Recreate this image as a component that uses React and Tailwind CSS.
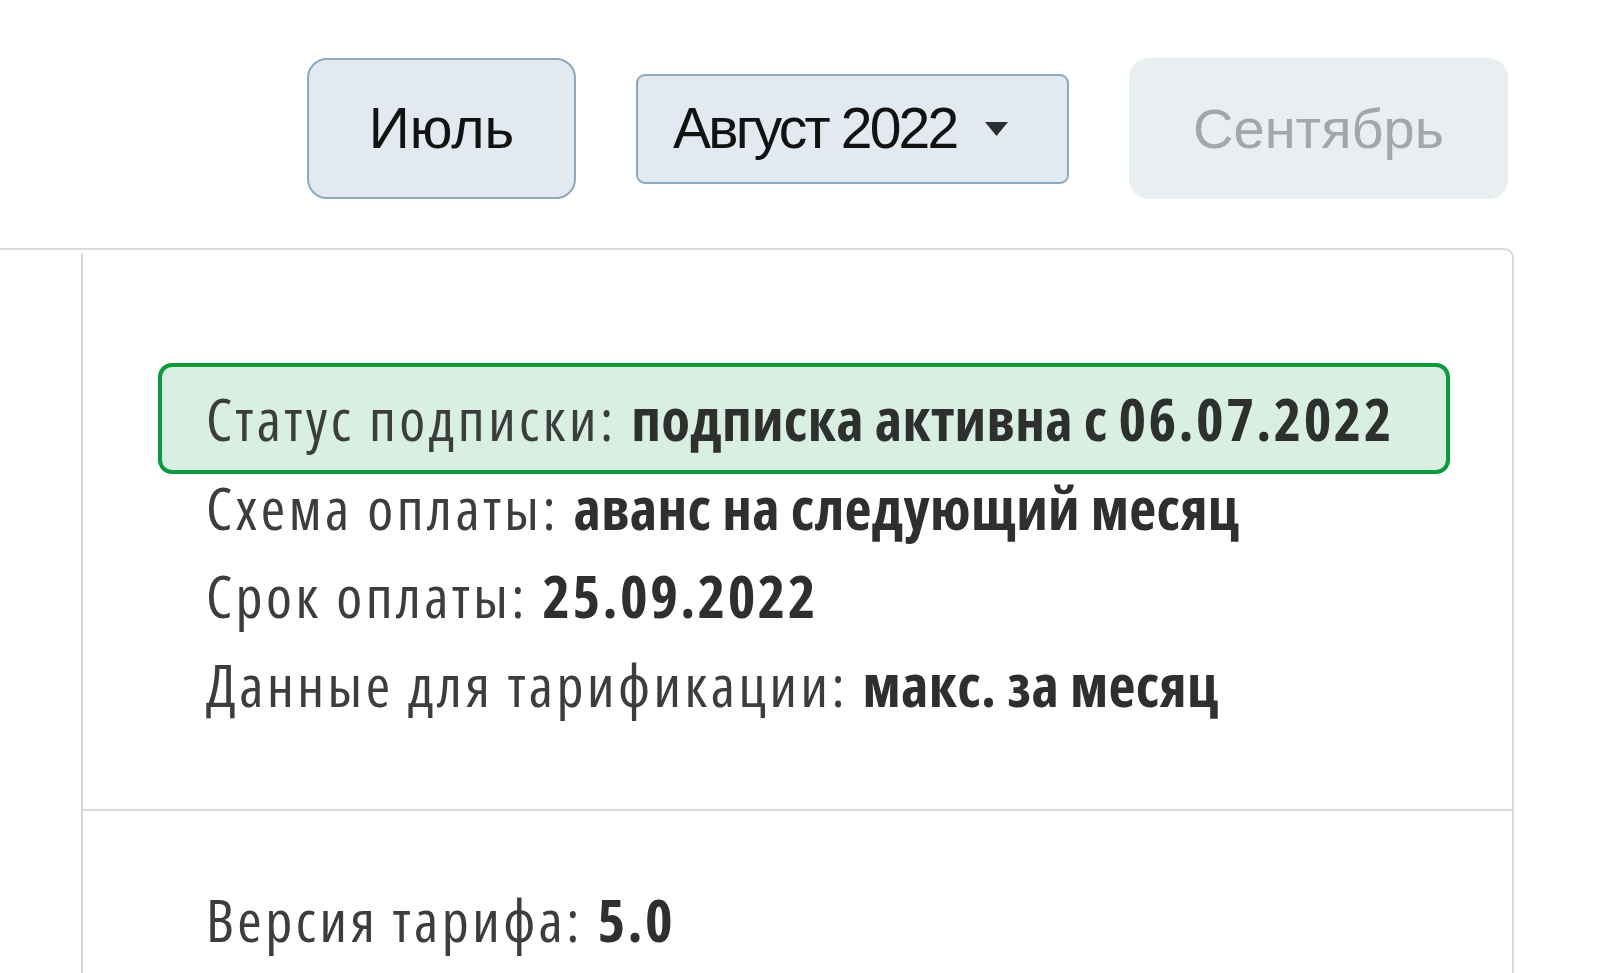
import React from "react";

const Digits = ({ children }) => <span className="tracking-[2.4px]">{children}</span>;

const rows = [
  { label: "Схема оплаты:", value: "аванс на следующий месяц" },
  { label: "Срок оплаты:", value: <Digits>25.09.2022</Digits> },
  { label: "Данные для тарификации:", value: "макс. за месяц" },
];

const Value = ({ children }) => (
  <b className="font-bold text-[#2d302f] tracking-[0.3px]">{children}</b>
);

const App = () => {
  return (
    <div className="min-h-screen bg-white font-['Open_Sans',sans-serif] [font-stretch:75%] text-[#3b3e3d] overflow-hidden">
      {/* Month switcher */}
      <div className="flex items-center justify-end gap-[60px] pt-[58px] pr-[91px] font-['Liberation_Sans',sans-serif] [font-stretch:100%]">
        <button className="w-[269px] h-[141px] rounded-[20px] border-2 border-[#8ea8bc] bg-[#e2e9f0] text-[57px] text-[#121212]">
          Июль
        </button>
        <button className="w-[433px] h-[110px] rounded-[9px] border-2 border-[#8ea8bc] bg-[#e2e9f0] flex items-center pl-[35px] text-[57px] text-[#121212]">
          <span className="tracking-[-2.8px]">Август 2022</span>
          <svg className="ml-[29px]" width="23" height="14" viewBox="0 0 23 14">
            <polygon points="0,0 23,0 11.5,14" fill="#2e2e2e" />
          </svg>
        </button>
        <button className="w-[379px] h-[141px] rounded-[20px] bg-[#e9eef1] text-[56px] text-[#a3a7a9]">
          Сентябрь
        </button>
      </div>

      {/* Card */}
      <div className="mt-[49px] w-[1514px] border-t-2 border-r-2 border-[#d9d9d9] rounded-tr-[10px] flex">
        <div className="w-[81px] shrink-0"></div>
        <div className="flex-1 mt-[3px] border-l-2 border-[#d6d6d6] tracking-[3.5px]">
          <div className="pt-[121px] pb-[81px] pl-[123px] pr-[62px] text-[59px] leading-[88.5px] whitespace-nowrap">
            <div className="-ml-[48px] pl-[44px] -my-[11px] py-[7px] border-4 border-[#0b9a3c] rounded-[14px] bg-[#d8efe2]">
              Статус подписки:{" "}
              <Value>
                подписка активна с <Digits>06.07.2022</Digits>
              </Value>
            </div>
            {rows.map((r) => (
              <div key={r.label}>
                {r.label} <Value>{r.value}</Value>
              </div>
            ))}
          </div>
          <div className="border-t-2 border-[#dadada] pt-[64px] pb-[80px] pl-[123px] text-[59px] leading-[88.5px]">
            <div>
              Версия тарифа:{" "}
              <Value>
                <Digits>5.0</Digits>
              </Value>
            </div>
          </div>
        </div>
      </div>
    </div>
  );
};

export default App;
